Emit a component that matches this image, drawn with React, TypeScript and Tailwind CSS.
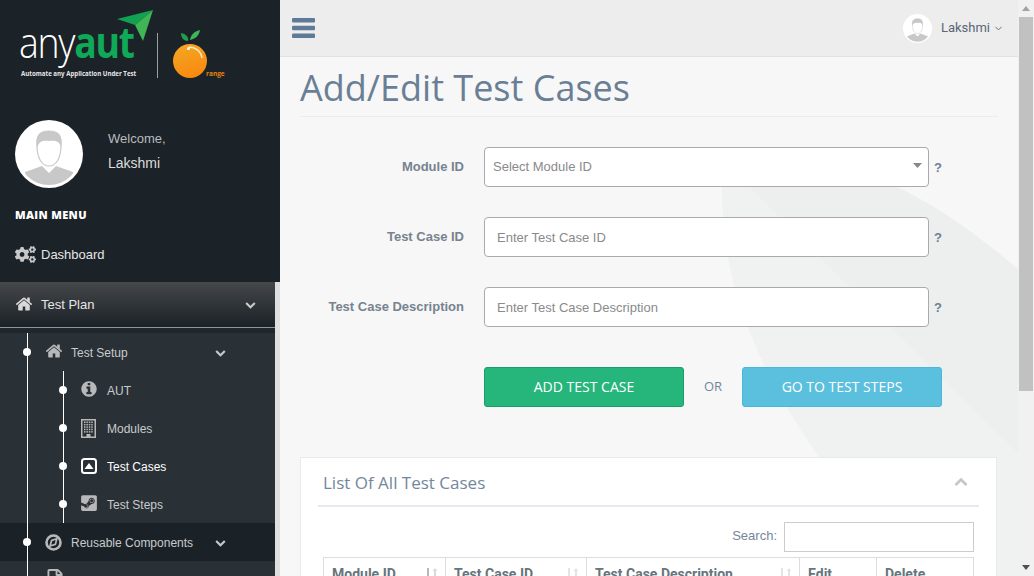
import React from "react";
import { FaCogs, FaSteamSquare, FaRegFile } from "react-icons/fa";
import { FiChevronDown } from "react-icons/fi";

const HOME =
  "M1472 992v480q0 26-19 45t-45 19h-384v-384h-256v384h-384q-26 0-45-19t-19-45v-480q0-1 .5-3t.5-3l575-474 575 474q1 2 1 6zm223-69l-62 74q-8 9-21 11h-3q-13 0-21-7l-692-577-692 577q-12 8-24 7-13-2-21-11l-62-74q-8-10-7-23.5t11-21.5l719-599q32-26 76-26t76 26l244 204v-195q0-14 9-23t23-9h192q14 0 23 9t9 23v408l219 182q10 8 11 21.5t-7 23.5z";
const CHEVRON =
  "M1683 808l-742 741q-19 19-45 19t-45-19l-742-741q-19-19-19-45.5t19-45.5l166-165q19-19 45-19t45 19l531 531 531-531q19-19 45-19t45 19l166 165q19 19 19 45.5t-19 45.5z";
const INFO =
  "M1152 1376v-160q0-14-9-23t-23-9h-96v-512q0-14-9-23t-23-9h-320q-14 0-23 9t-9 23v160q0 14 9 23t23 9h96v320h-96q-14 0-23 9t-9 23v160q0 14 9 23t23 9h448q14 0 23-9t9-23zm-128-896v-160q0-14-9-23t-23-9h-192q-14 0-23 9t-9 23v160q0 14 9 23t23 9h192q14 0 23-9t9-23zm640 416q0 209-103 385.5t-279.5 279.5-385.5 103-385.5-103-279.5-279.5-103-385.5 103-385.5 279.5-279.5 385.5-103 385.5 103 279.5 279.5 103 385.5z";

function Fa4({ d, size, className }: { d: string; size: number; className?: string }) {
  return (
    <svg width={size} height={size} viewBox="0 0 1792 1792" className={`block shrink-0 ${className ?? ""}`} fill="currentColor">
      <path d={d} />
    </svg>
  );
}

function Avatar({ size, id }: { size: number; id: string }) {
  return (
    <svg width={size} height={size} viewBox="0 0 68 68" className="block shrink-0">
      <circle cx="34" cy="34" r="34" fill="#ffffff" />
      <clipPath id={id}>
        <circle cx="34" cy="34" r="31" />
      </clipPath>
      <g clipPath={`url(#${id})`}>
        <path d="M10 52 L27 46 L34 53 L41 46 L58 52 L60 68 L8 68 Z" fill="#c8c8c8" />
        <path d="M22 26 C21 15 25 11 34 11 C43 11 47 15 46 26 C46 38 41 46 34 46 C27 46 22 38 22 26 Z" fill="#ffffff" stroke="#c8c8c8" strokeWidth="1.2" />
        <path d="M22 28 C20 15 25 11 34 11 C43 11 48 15 46 28 C45 22 42 20 34 21 C28 20 24 21 22 28 Z" fill="#c8c8c8" />
      </g>
    </svg>
  );
}

function Logo() {
  return (
    <div className="relative h-[82px] w-[230px]">
      <span className="absolute left-[19px] top-[20px] origin-left scale-x-[0.87] whitespace-nowrap text-[43px] leading-[44px] tracking-[-1.5px] font-light text-white [font-family:'Open_Sans',sans-serif]">
        any<span className="font-bold text-[#0fa958]">aut</span>
      </span>
      <span className="absolute left-[21px] top-[69px] whitespace-nowrap text-[6.15px] leading-[10px] font-bold text-[#e8e8e8] [font-family:'Open_Sans',sans-serif]">
        Automate any Application Under Test
      </span>
      <svg width="230" height="82" viewBox="0 0 230 82" className="absolute left-0 top-0">
        <path d="M117 19 L153 10 L135 25 Z" fill="#12a150" />
        <path d="M135 25 L153 10 L143 41 L138 31 Z" fill="#3fb556" />
        <rect x="157" y="33" width="1" height="45" fill="#9aa0a3" />
        <defs>
          <linearGradient id="org" x1="0.3" y1="0" x2="0.6" y2="1">
            <stop offset="0" stopColor="#f5a623" />
            <stop offset="1" stopColor="#f7890f" />
          </linearGradient>
        </defs>
        <circle cx="190" cy="61" r="17" fill="url(#org)" />
        <path d="M189 47 C195 47 201 51 202 58" stroke="#ffe9c4" strokeWidth="1.5" fill="none" />
        <circle cx="188.5" cy="48.5" r="1.5" fill="#fff" />
        <path d="M181 33 C186 34 189 37 188 41 C184 41 181 38 181 33 Z" fill="#1f9e4d" />
        <path d="M200 30 C199 36 195 39 190 40 C191 34 195 31 200 30 Z" fill="#3fb556" />
      </svg>
      <span className="absolute left-[206px] top-[69px] text-[6.5px] leading-[10px] font-bold text-[#e8820c] [font-family:'Open_Sans',sans-serif]">
        range
      </span>
    </div>
  );
}

function BuildingIcon() {
  const cells: React.ReactNode[] = [];
  for (let r = 0; r < 5; r++) {
    for (let c = 0; c < 4; c++) {
      cells.push(<rect key={`${r}-${c}`} x={3 + c * 2.4} y={2.5 + r * 2.4} width="1.5" height="1.5" fill="#b8b8b8" />);
    }
  }
  return (
    <svg width="15" height="19" viewBox="0 0 15 19" className="block">
      <rect x="0.75" y="0.75" width="13.5" height="17.5" fill="none" stroke="#b8b8b8" strokeWidth="1.5" />
      {cells}
      <rect x="5.5" y="15" width="4" height="3.5" fill="#b8b8b8" />
    </svg>
  );
}

function SquareUpIcon() {
  return (
    <svg width="16" height="16" viewBox="0 0 16 16" className="block">
      <rect x="1" y="1" width="14" height="14" rx="2.5" fill="none" stroke="#ffffff" strokeWidth="2" />
      <path d="M3.5 11 L8 5 L12.5 11 Z" fill="#ffffff" />
    </svg>
  );
}

function CompassIcon() {
  return (
    <svg width="17" height="17" viewBox="0 0 17 17" className="block shrink-0">
      <circle cx="8.5" cy="8.5" r="7" fill="none" stroke="#b8b8b8" strokeWidth="2.6" />
      <path d="M11.8 4.8 L10.4 10.4 L5 12 L6.6 6.4 Z" fill="none" stroke="#b8b8b8" strokeWidth="1.7" />
    </svg>
  );
}

const subItems = [
  { label: "AUT", icon: <Fa4 d={INFO} size={18} className="-ml-[1px] -mt-[3px] text-[#b8b8b8]" />, active: false },
  { label: "Modules", icon: <BuildingIcon />, active: false },
  { label: "Test Cases", icon: <SquareUpIcon />, active: true },
  { label: "Test Steps", icon: <FaSteamSquare size={18} className="-ml-[1px] -mt-[3px] text-[#b8b8b8]" />, active: false },
];

function Sidebar() {
  return (
    <aside className="flex w-[280px] shrink-0 flex-col overflow-hidden bg-[#1b2228] [font-family:'Liberation_Sans',sans-serif]">
      <div className="h-[282px] shrink-0">
        <Logo />
        <div className="mt-[38px] flex items-start pl-[15px]">
          <Avatar size={68} id="av-big" />
          <div className="ml-[25px] mt-[8px]">
            <div className="text-[13px] leading-[22px] text-[#b9bcbe]">Welcome,</div>
            <div className="mt-[2px] text-sm leading-[22px] text-[#dcdcdc]">Lakshmi</div>
          </div>
        </div>
        <div className="mt-[19px] pl-[15px] text-[11px] leading-[16px] font-extrabold tracking-[0.35px] text-white [font-family:'Open_Sans',sans-serif]">
          MAIN MENU
        </div>
        <div className="mt-[21px] flex items-center gap-[5px] pl-[15px] text-[13px] leading-[20px] text-[#e6e6e6]">
          <FaCogs size={21} className="text-[#c8c8c8]" />
          Dashboard
        </div>
      </div>
      <div className="flex min-h-0 flex-1 flex-col bg-[#dfdfdf]">
        <div className="flex h-[46px] w-[275px] shrink-0 items-center border-b border-[#8f9497] bg-gradient-to-b from-[#45484b] to-[#1b2227] pl-[15px] pr-[19px] text-[13px] text-[#e6e6e6]">
          <Fa4 d={HOME} size={18} className="-mt-[1px] text-[#d8d8d8]" />
          <span className="ml-[8px] flex-1 pt-[1px]">Test Plan</span>
          <Fa4 d={CHEVRON} size={11} className="text-[#c8c8c8]" />
        </div>
        <div className="h-[5px] w-[275px] shrink-0 bg-[#1f272c]" />
        <div className="relative w-[275px] flex-1 bg-[#2a3136]">
          <div className="absolute bottom-0 left-[27px] top-0 z-10 w-[1px] bg-white" />
          <div className="relative flex h-[38px] items-center pl-[45px] pr-[49px] text-xs text-[#c8cbcd]">
            <span className="absolute left-[23px] top-[15px] size-2 rounded-full bg-white" />
            <Fa4 d={HOME} size={18} className="-mt-[2px] text-[#b8b8b8]" />
            <span className="ml-[8px] flex-1 pt-[2px]">Test Setup</span>
            <Fa4 d={CHEVRON} size={11} className="text-[#c8c8c8]" />
          </div>
          <div className="relative pl-[81px]">
            <div className="absolute bottom-0 left-[63px] top-0 w-[1px] bg-white" />
            {subItems.map((s) => (
              <div
                key={s.label}
                className={`relative flex h-[38px] items-center text-xs ${s.active ? "text-white" : "text-[#c8cbcd]"}`}
              >
                <span className="absolute left-[-22px] top-[15px] size-2 rounded-full bg-white" />
                <span className="w-[26px]">{s.icon}</span>
                <span className="pt-[2px]">{s.label}</span>
              </div>
            ))}
          </div>
          <div className="relative flex h-[38px] items-center bg-[#1b2227] pl-[45px] pr-[49px] text-xs text-[#c8cbcd]">
            <span className="absolute left-[23px] top-[15px] z-10 size-2 rounded-full bg-white" />
            <CompassIcon />
            <span className="ml-[9px] flex-1 pt-[2px]">Reusable Components</span>
            <Fa4 d={CHEVRON} size={11} className="text-[#c8c8c8]" />
          </div>
          <div className="flex h-[38px] items-start pl-[45px] pt-[8px] text-[#b8b8b8]">
            <FaRegFile size={20} />
          </div>
        </div>
      </div>
    </aside>
  );
}

function Field({ label, placeholder, select }: { label: string; placeholder: string; select?: boolean }) {
  return (
    <div className="flex h-10 items-center">
      <label className="w-[164px] text-right text-[13px] font-bold text-[#76838f] [font-family:'Liberation_Sans',sans-serif]">
        {label}
      </label>
      <div className={`ml-[20px] flex h-10 w-[445px] items-center justify-between rounded-[4px] border border-[#aaaaaa] bg-white ${select ? "pl-[8px] pr-[6px]" : "pl-[12px]"}`}>
        <span className={`text-[13px] text-[#8a8a8a] [font-family:'Liberation_Sans',sans-serif] ${select ? "" : "pt-[1px]"}`}>{placeholder}</span>
        {select && (
          <svg width="9" height="5" viewBox="0 0 9 5" className="mb-[3px] block">
            <path d="M0 0 L9 0 L4.5 5 Z" fill="#888888" />
          </svg>
        )}
      </div>
      <span className="ml-[5px] pt-[2px] text-[13px] font-bold text-[#6a7f96] [font-family:'Liberation_Sans',sans-serif]">?</span>
    </div>
  );
}

function SortIcon({ first }: { first?: boolean }) {
  const a = first ? "#b4bac0" : "#e2e4e7";
  const b = first ? "#d8dbde" : "#e2e4e7";
  return (
    <svg width="11" height="13" viewBox="0 0 11 13" className="mt-[3px] block shrink-0">
      <path d="M1 1 h2 v8 h1.5 L2 12 L-0.5 9 H1 Z" fill={a} />
      <path d="M8 12 h2 v-8 h1.5 L9 1 L6.5 4 H8 Z" fill={b} />
    </svg>
  );
}

function Th({ label, width, icon }: { label: string; width: number; icon?: React.ReactNode }) {
  return (
    <div style={{ width }} className="flex h-[40px] shrink-0 items-start justify-between border-r border-[#dddddd] pl-2 pr-[8px] pt-[6px] text-sm font-bold text-[#67757c] last:border-r-0">
      <span>{label}</span>
      {icon}
    </div>
  );
}

function Main() {
  return (
    <main className="relative flex min-w-0 flex-1 flex-col overflow-hidden bg-[#f7f7f7]">
      <svg viewBox="0 0 738 520" width="738" height="520" className="absolute left-0 top-[57px]">
        <path d="M442 130 C442 100 530 85 617 130 C660 150 700 180 738 212 L738 520 L640 520 C560 440 470 320 448 200 C444 175 442 150 442 130 Z" fill="#edefef" />
        <path d="M470 130 L540 200 L610 270 L738 396 L738 520 L640 520 C560 440 470 320 448 200 C444 175 442 150 442 130 Z" fill="#f0f1f1" />
      </svg>
      <header className="relative flex h-[57px] shrink-0 items-center justify-between border-b border-[#dfe1e6] bg-[#ededed] pl-[12px] pr-[14px]">
        <svg width="23" height="20" viewBox="0 0 23 20" className="block">
          <rect x="0" y="0" width="23" height="4.4" rx="1" fill="#5f7a96" />
          <rect x="0" y="7.8" width="23" height="4.4" rx="1" fill="#5f7a96" />
          <rect x="0" y="15.6" width="23" height="4.4" rx="1" fill="#5f7a96" />
        </svg>
        <div className="flex items-center">
          <Avatar size={29} id="av-small" />
          <span className="ml-[9px] text-[13px] text-[#5a6775] [font-family:'Roboto',sans-serif]">Lakshmi</span>
          <FiChevronDown size={11} className="ml-[3px] text-[#5a6775]" />
        </div>
      </header>
      <div className="relative flex flex-1 flex-col px-5">
        <h1 className="h-[60px] border-b border-[#ececec] text-[36px] leading-[62px] font-normal text-[#6a7f96] [font-family:'Open_Sans',sans-serif]">
          Add/Edit Test Cases
        </h1>
        <div className="mt-[30px] flex flex-col gap-[30px]">
          <Field label="Module ID" placeholder="Select Module ID" select />
          <Field label="Test Case ID" placeholder="Enter Test Case ID" />
          <Field label="Test Case Description" placeholder="Enter Test Case Description" />
        </div>
        <div className="ml-[184px] mt-10 flex items-center [font-family:'Open_Sans',sans-serif]">
          <button className="h-10 w-[200px] rounded-[3px] border border-[#169f6a] bg-[#26b67c] text-sm text-white">ADD TEST CASE</button>
          <span className="w-[58px] text-center text-[13px] text-[#73879c]">OR</span>
          <button className="h-10 w-[200px] rounded-[3px] border border-[#46b8da] bg-[#5bc0de] text-sm text-white">GO TO TEST STEPS</button>
        </div>
        <section className="mt-[50px] w-[697px] shrink-0 border border-[#e6e9ed] bg-white px-[17px] pt-[6px]">
          <div className="flex h-[43px] items-center justify-between border-b-2 border-[#e6e9ed] pb-[3px] pl-[5px] pr-[11px]">
            <span className="text-[17px] text-[#73879c] [font-family:'Open_Sans',sans-serif]">List Of All Test Cases</span>
            <svg width="14" height="14" viewBox="0 0 1792 1792" className="block rotate-180" fill="#c5c7cb">
              <path d={CHEVRON} />
            </svg>
          </div>
          <div className="mt-[15px] flex items-center justify-end pr-[5px]">
            <span className="mb-[2px] mr-[7px] text-[13px] text-[#73879c] [font-family:'Liberation_Sans',sans-serif]">Search:</span>
            <div className="h-[30px] w-[190px] border border-[#cccccc] bg-white" />
          </div>
          <div className="ml-[5px] mt-[5px] flex w-[651px] border border-[#dddddd] [font-family:'Roboto',sans-serif]">
            <Th label="Module ID" width={122} icon={<SortIcon first />} />
            <Th label="Test Case ID" width={141} icon={<SortIcon />} />
            <Th label="Test Case Description" width={213} icon={<SortIcon />} />
            <Th label="Edit" width={77} />
            <Th label="Delete" width={96} />
          </div>
        </section>
      </div>
    </main>
  );
}

function Scrollbar() {
  return (
    <div className="flex w-4 shrink-0 flex-col items-center bg-[#f1f1f1]">
      <div className="flex h-[17px] items-center justify-center text-[#a3a3a3]">
        <svg width="8" height="5" viewBox="0 0 8 5"><path d="M4 0 L8 5 L0 5 Z" fill="currentColor" /></svg>
      </div>
      <div className="h-[374px] w-[14px] bg-[#c1c1c1]" />
      <div className="flex-1" />
      <div className="flex h-[17px] items-center justify-center text-[#505050]">
        <svg width="8" height="5" viewBox="0 0 8 5"><path d="M0 0 L8 0 L4 5 Z" fill="currentColor" /></svg>
      </div>
    </div>
  );
}

export default function App() {
  return (
    <div className="flex h-[576px] w-[1034px] overflow-hidden">
      <Sidebar />
      <Main />
      <Scrollbar />
    </div>
  );
}
